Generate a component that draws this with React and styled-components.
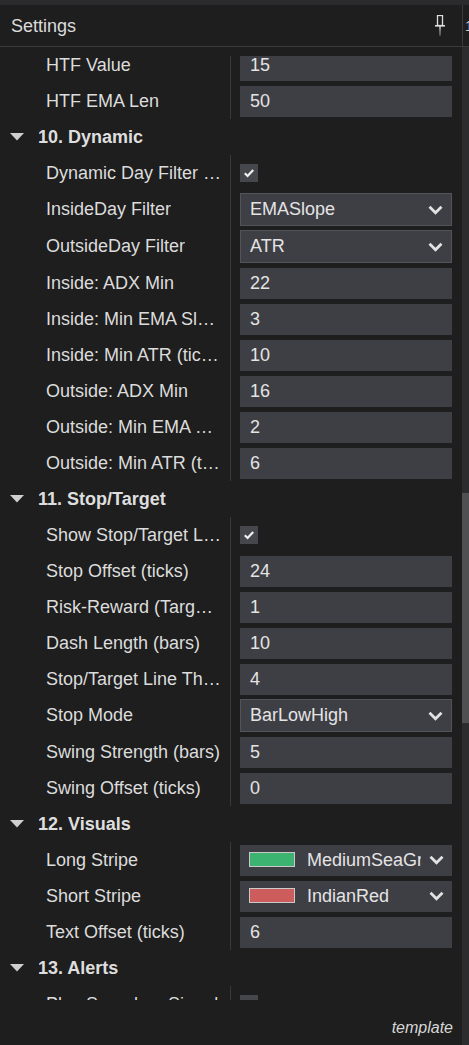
import React from 'react';
import styled, { createGlobalStyle } from 'styled-components';

const GlobalStyle = createGlobalStyle`
    html, body {
        margin: 0;
        padding: 0;
        background: #1e1e1e;
    }
    * {
        box-sizing: border-box;
    }
`;

const Panel = styled.div`
    width: 469px;
    height: 1045px;
    display: flex;
    flex-direction: column;
    background: #1e1e1e;
    overflow: hidden;
    font-family: "Liberation Sans", Arial, sans-serif;
    color: #dcdcdc;
`;

const TopStrip = styled.div`
    height: 5px;
    background: #2b2b2d;
    flex-shrink: 0;
`;

const Header = styled.div`
    height: 42px;
    display: flex;
    align-items: stretch;
    border-bottom: 1px solid #3a3a3a;
    flex-shrink: 0;
`;

const Title = styled.div`
    flex: 1;
    display: flex;
    align-items: center;
    padding: 2px 0 0 11px;
    font-size: 18px;
    color: #dcdcdc;
`;

const PinButton = styled.div`
    width: 30px;
    display: flex;
    align-items: center;
    justify-content: center;
    margin-right: 7px;
`;

const HeaderEdge = styled.div`
    width: 7px;
    border-left: 1px solid #3a3a3a;
    overflow: hidden;
    display: flex;
    align-items: center;
    padding-left: 2px;
    font-size: 15px;
    color: #cfcfcf;
`;

const Body = styled.div`
    flex: 1;
    display: flex;
    min-height: 0;
`;

const MainColumn = styled.div`
    width: 462px;
    display: flex;
    flex-direction: column;
`;

const Viewport = styled.div`
    margin-top: 9px;
    height: 944px;
    overflow: hidden;
    flex-shrink: 0;
`;

const Scroller = styled.div`
    margin-top: -9px;
`;

const Footer = styled.div`
    flex: 1;
    display: flex;
    justify-content: flex-end;
    align-items: center;
    padding: 10px 9px 0 0;
    font-style: italic;
    font-size: 16px;
    color: #d6d6d6;
`;

const Track = styled.div`
    width: 7px;
    background: #2c2c2e;
`;

const Thumb = styled.div`
    margin-top: 446px;
    height: 230px;
    background: #505053;
`;

const SectionRow = styled.div`
    height: 36px;
    display: flex;
    align-items: center;
    padding-left: 10px;
    gap: 14px;
    font-weight: bold;
    font-size: 18px;
    color: #dedede;
`;

const Row = styled.div`
    height: ${(p) => p.h || 36}px;
    display: flex;
    align-items: stretch;
`;

const LabelCell = styled.div`
    width: 231px;
    border-right: 1px solid #393939;
    padding: 0 8px 0 46px;
    display: flex;
    align-items: center;
    font-size: 18px;
    color: #dcdcdc;
    min-width: 0;
`;

const LabelText = styled.span`
    white-space: nowrap;
    overflow: hidden;
    text-overflow: ellipsis;
`;

const ValueCell = styled.div`
    width: 231px;
    padding: 0 10px 0 9px;
    display: flex;
    align-items: center;
`;

const TextBox = styled.div`
    width: 100%;
    height: 31px;
    background: #3e3e45;
    display: flex;
    align-items: center;
    padding-left: 10px;
    font-size: 18px;
    color: #e4e4e4;
`;

const Select = styled.div`
    width: 100%;
    height: ${(p) => (p.bordered ? 33 : 31)}px;
    background: #3e3e45;
    border: ${(p) => (p.bordered ? '1px solid #525259' : 'none')};
    display: flex;
    align-items: center;
    padding: 0 8px 0 9px;
    font-size: 18px;
    color: #e4e4e4;
    gap: 8px;
`;

const SelectText = styled.span`
    flex: 1;
    white-space: nowrap;
    overflow: hidden;
`;

const Swatch = styled.span`
    width: 46px;
    height: 15px;
    flex-shrink: 0;
    margin: -2px 4px 0 0;
    background: ${(p) => p.color};
    border: 1px solid #c9c9c9;
`;

const CheckBox = styled.div`
    width: 18px;
    height: 18px;
    background: #46464d;
    display: flex;
    align-items: center;
    justify-content: center;
`;

const Chevron = () => (
    <svg width="15" height="10" viewBox="0 0 15 10" style={{ flexShrink: 0 }}>
        <path d="M1.5 1.8 L7.5 7.8 L13.5 1.8" fill="none" stroke="#e2e2e2" strokeWidth="2.8" />
    </svg>
);

const Check = () => (
    <svg width="12" height="10" viewBox="0 0 12 10">
        <path d="M1.8 5.2 L4.6 8 L10.2 2" fill="none" stroke="#f0f0f0" strokeWidth="2.2" />
    </svg>
);

const Triangle = () => (
    <svg width="14" height="8" viewBox="0 0 14 8">
        <path d="M0 0 H14 L7 7.5 Z" fill="#cfcfcf" />
    </svg>
);

const Pin = () => (
    <svg width="12" height="22" viewBox="0 0 12 22">
        <rect x="3.5" y="0.5" width="5" height="10" fill="none" stroke="#dedede" strokeWidth="1.3" />
        <rect x="1" y="10" width="10" height="1.6" fill="#dedede" />
        <path d="M5.3 11 H6.7 L6.2 21 H5.8 Z" fill="#dedede" />
    </svg>
);

const rows = [
    { type: 'text', label: 'HTF Value', value: '15' },
    { type: 'text', label: 'HTF EMA Len', value: '50' },
    { type: 'section', label: '10. Dynamic' },
    { type: 'check', label: 'Dynamic Day Filter Enabled' },
    { type: 'select', label: 'InsideDay Filter', value: 'EMASlope' },
    { type: 'select', label: 'OutsideDay Filter', value: 'ATR' },
    { type: 'text', label: 'Inside: ADX Min', value: '22' },
    { type: 'text', label: 'Inside: Min EMA Slope', value: '3' },
    { type: 'text', label: 'Inside: Min ATR (ticks)', value: '10' },
    { type: 'text', label: 'Outside: ADX Min', value: '16' },
    { type: 'text', label: 'Outside: Min EMA Slope', value: '2' },
    { type: 'text', label: 'Outside: Min ATR (ticks)', value: '6' },
    { type: 'section', label: '11. Stop/Target' },
    { type: 'check', label: 'Show Stop/Target Lines' },
    { type: 'text', label: 'Stop Offset (ticks)', value: '24' },
    { type: 'text', label: 'Risk-Reward (Target R)', value: '1' },
    { type: 'text', label: 'Dash Length (bars)', value: '10' },
    { type: 'text', label: 'Stop/Target Line Thickness', value: '4' },
    { type: 'select', label: 'Stop Mode', value: 'BarLowHigh' },
    { type: 'text', label: 'Swing Strength (bars)', value: '5' },
    { type: 'text', label: 'Swing Offset (ticks)', value: '0' },
    { type: 'section', label: '12. Visuals' },
    { type: 'color', label: 'Long Stripe', value: 'MediumSeaGreen', color: '#3cb371' },
    { type: 'color', label: 'Short Stripe', value: 'IndianRed', color: '#cd5c5c' },
    { type: 'text', label: 'Text Offset (ticks)', value: '6' },
    { type: 'section', label: '13. Alerts' },
    { type: 'check', label: 'Play Sound on Signal', off: true },
];

const renderValue = (r) => {
    switch (r.type) {
        case 'check':
            return <CheckBox>{!r.off && <Check />}</CheckBox>;
        case 'select':
            return (
                <Select bordered>
                    <SelectText>{r.value}</SelectText>
                    <Chevron />
                </Select>
            );
        case 'color':
            return (
                <Select>
                    <Swatch color={r.color} />
                    <SelectText>{r.value}</SelectText>
                    <Chevron />
                </Select>
            );
        default:
            return <TextBox>{r.value}</TextBox>;
    }
};

const App = () => {
    return (
        <>
            <GlobalStyle />
            <Panel>
                <TopStrip />
                <Header>
                    <Title>Settings</Title>
                    <PinButton>
                        <Pin />
                    </PinButton>
                    <HeaderEdge>1</HeaderEdge>
                </Header>
                <Body>
                    <MainColumn>
                        <Viewport>
                            <Scroller>
                                {rows.map((r, i) =>
                                    r.type === 'section' ? (
                                        <SectionRow key={i}>
                                            <Triangle />
                                            <span>{r.label}</span>
                                        </SectionRow>
                                    ) : (
                                        <Row key={i} h={r.type === 'select' ? 37 : 36}>
                                            <LabelCell>
                                                <LabelText>{r.label}</LabelText>
                                            </LabelCell>
                                            <ValueCell>{renderValue(r)}</ValueCell>
                                        </Row>
                                    )
                                )}
                            </Scroller>
                        </Viewport>
                        <Footer>template</Footer>
                    </MainColumn>
                    <Track>
                        <Thumb />
                    </Track>
                </Body>
            </Panel>
        </>
    );
};

export default App;
